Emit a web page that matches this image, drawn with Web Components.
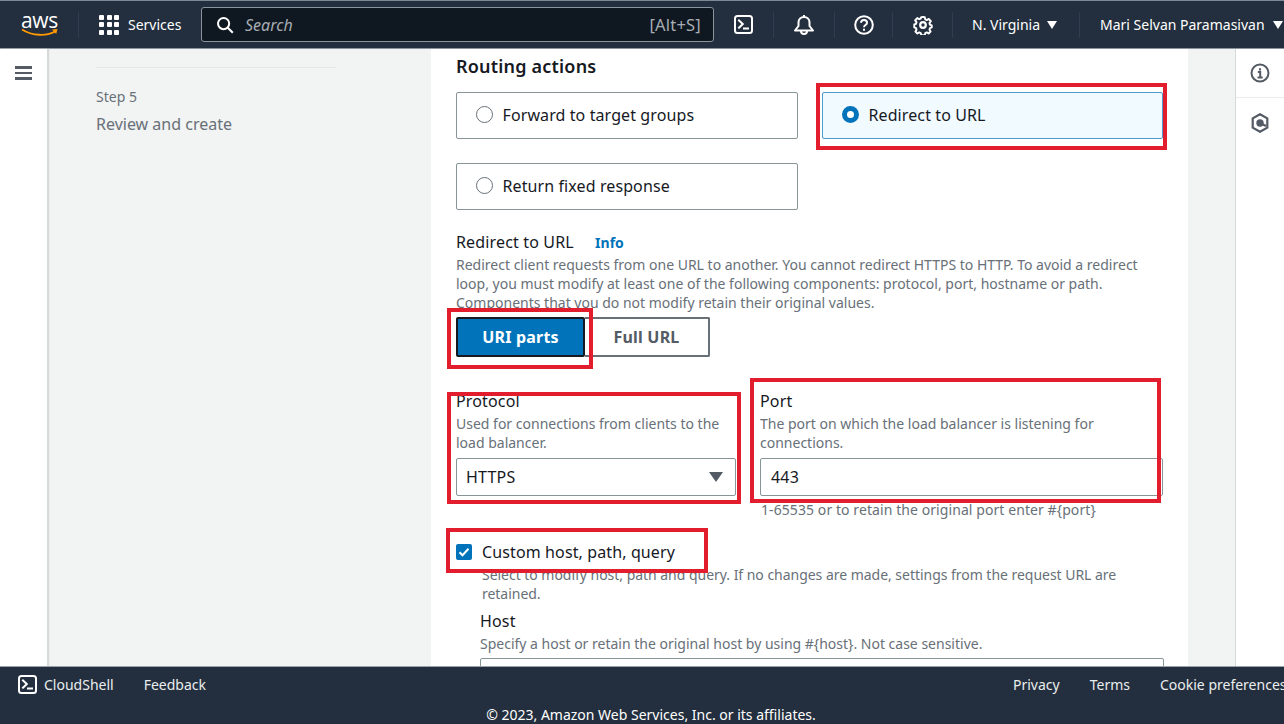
<!DOCTYPE html>
<html lang="en">
<head>
<meta charset="utf-8">
<title>Edit listener</title>
<style>
  html, body { margin: 0; height: 100%; }
  body { font-family: "Noto Sans", "Open Sans", sans-serif; color: #16191f; overflow: hidden; }
  app-shell { height: 724px; }
</style>
</head>
<body>
<app-shell>
  <top-bar slot="top"></top-bar>
  <side-rail slot="left"></side-rail>
  <step-nav slot="steps" number="Step 5" name="Review and create"></step-nav>
  <routing-form slot="main"></routing-form>
  <tool-rail slot="right"></tool-rail>
  <foot-bar slot="bottom"></foot-bar>
</app-shell>

<script>
const ICON_SHELL = `<svg width="19" height="19" viewBox="0 0 19 19" fill="none" stroke="#fff" stroke-width="2"><rect x="1" y="1" width="17" height="17" rx="2.5"/><path d="M5 5.500l3.800 3.600L5 12.700M10 13.500h4" stroke-linecap="square"/></svg>`;

function define(name, html) {
  customElements.define(name, class extends HTMLElement {
    constructor() {
      super();
      this.attachShadow({ mode: "open" }).innerHTML = html;
    }
  });
}

define("app-shell", `
<style>
  :host { display: grid; grid-template-rows: 49px 1fr 58px; width: 1284px; }
  .middle { display: grid; grid-template-columns: 48px 383px 757px 47px 49px; min-height: 0; background: #f2f3f3; }
</style>
<slot name="top"></slot>
<div class="middle">
  <slot name="left"></slot>
  <slot name="steps"></slot>
  <slot name="main"></slot>
  <div></div>
  <slot name="right"></slot>
</div>
<slot name="bottom"></slot>`);

define("top-bar", `
<style>
  :host { display: flex; align-items: center; box-sizing: border-box; height: 49px; background: #232f3e; color: #fff;
    border-top: 1px solid #7d8894; border-bottom: 1px solid #8b949e; font-size: 14px; white-space: nowrap; overflow: hidden; }
  .logo { width: 78px; box-sizing: border-box; padding-left: 21px; display: flex; flex-direction: column; align-items: flex-start; }
  .logo b { font: 400 21px/17px "Open Sans", sans-serif; letter-spacing: -.4px; }
  .logo svg { margin-top: -1px; }
  .cell { display: flex; align-items: center; justify-content: center; height: 26px; border-left: 1px solid #2f3d4e; flex: none; box-sizing: border-box; }
  .services { width: 123px; gap: 9px; justify-content: flex-start; padding-left: 20px; }
  .grid { display: grid; grid-template-columns: repeat(3, 5px); gap: 2.500px; }
  .grid i { width: 5px; height: 5px; background: #fff; border-radius: 1px; }
  .search { flex: none; width: 513px; height: 35px; box-sizing: border-box; background: #0f1720; border: 1px solid #8b949e; border-radius: 3px;
    display: flex; align-items: center; gap: 11px; padding: 0 12px 0 14px; color: #a7adb4; font-size: 16px; }
  .search em { flex: 1; }
  .search span { font-size: 16.500px; letter-spacing: .2px; }
  .first { width: 59px; border: 0; }
  .region { width: 127px; justify-content: flex-start; padding-left: 19px; gap: 7px; }
  .user { width: 205px; justify-content: flex-start; padding-left: 20px; gap: 8px; }
  .tri { width: 0; height: 0; border: 5px solid transparent; border-top: 8px solid #fff; border-bottom: 0; }
</style>
<div class="logo">
  <b>aws</b>
  <svg width="38" height="9" viewBox="0 0 38 9" fill="none"><path d="M1 1.500C11 8 26 8.500 35 3" stroke="#ff9900" stroke-width="1.800"/><path d="M31 1.500l5.500-.6-1.300 5z" fill="#ff9900"/></svg>
</div>
<div class="cell services"><div class="grid"><i></i><i></i><i></i><i></i><i></i><i></i><i></i><i></i><i></i></div>Services</div>
<div class="search">
  <svg width="18" height="18" viewBox="0 0 18 18" fill="none" stroke="#fff" stroke-width="2"><circle cx="7.600" cy="7.600" r="5.600"/><path d="M11.800 11.800l5 5"/></svg>
  <em>Search</em><span>[Alt+S]</span>
</div>
<div class="cell first">${ICON_SHELL}</div>
<div class="cell" style="width:61px"><svg width="22" height="22" viewBox="0 0 22 22" fill="none" stroke="#fff" stroke-width="2"><path d="M2 16.500h18L16.500 12V8.500C16.500 5 14 3 11 3S5.500 5 5.500 8.500V12z" stroke-linejoin="round"/><path d="M8 17a3 3 0 0 0 6 0"/><path d="M11 1v2"/></svg></div>
<div class="cell" style="width:58px"><svg width="20" height="20" viewBox="0 0 20 20" fill="none" stroke="#fff" stroke-width="2"><circle cx="10" cy="10" r="8.800"/><path d="M7 7.800C7 5.900 8.400 5 10 5s3 1 3 2.700c0 2.400-3 2.300-3 4.600"/><path d="M10 13.700v2"/></svg></div>
<div class="cell" style="width:60px"><svg width="20" height="20" viewBox="0 0 20 20" fill="none" stroke="#fff" stroke-width="2.200"><circle cx="10" cy="10" r="2.800"/><path d="M10 1.200l2 .2.500 2.500 1.800.8 2.200-1.300 2.300 2.600-1.500 2 .5 1.900 2 .8v2.200l-2 .8-.5 1.900 1.200 2-2.200 2.200-2-1.300-1.800.8-.5 2.400H8l-.5-2.400-1.800-.8-2 1.300-2.200-2.200 1.200-2-.5-1.900-2-.8V9.700l2-.8.500-1.900-1.500-2L3.500 2.400l2.200 1.300 1.800-.8L8 1.400z" transform="translate(1.100 .9) scale(.89)" stroke-linejoin="round"/></svg></div>
<div class="cell region">N. Virginia <i class="tri"></i></div>
<div class="cell user">Mari Selvan Paramasivan <i class="tri"></i></div>`);

define("side-rail", `
<style>
  :host { display: block; background: #fff; border-right: 1px solid #d5dbdb; box-shadow: 1px 0 1px #d5dbdb; padding: 17px 0 0 15px; box-sizing: border-box; }
  i { display: block; width: 17px; height: 2.500px; background: #545b64; margin-bottom: 3px; }
</style>
<i></i><i></i><i></i>`);

define("step-nav", `
<style>
  :host { display: block; padding: 18px 95px 0 48px; color: #687078; }
  hr { border: 0; border-top: 1.500px solid #e6e8e8; margin: 0 0 19px; }
  small { display: block; font-size: 14px; line-height: 20px; }
  strong { display: block; font-weight: 400; font-size: 16px; line-height: 22px; margin-top: 6px; }
</style>
<hr>
<small id="n"></small>
<strong id="t"></strong>`);

define("radio-tile", `
<style>
  :host { display: flex; align-items: center; gap: 10px; height: 47px; box-sizing: border-box; padding: 0 18.500px 2px;
    background: #fff; border: 1px solid #879596; border-radius: 2px; font-size: 16px; letter-spacing: .1px; }
  :host([checked]) { background: #f1faff; border-color: #4a9bcf; }
  i { width: 17px; height: 17px; box-sizing: border-box; border: 1.500px solid #687078; border-radius: 50%; background: #fff; margin-top: 2px; margin-bottom: 2px; }
  :host([checked]) i { border: 5px solid #0073bb; }
</style>
<i></i><slot></slot>`);

define("field-block", `
<style>
  :host { display: block; }
  .label { font-size: 16px; line-height: 22px; letter-spacing: .15px; }
  .desc { font-size: 14px; line-height: 19px; color: #687078; margin-top: var(--desc-gap, 2px); }
</style>
<div class="label"><slot name="label"></slot></div>
<div class="desc"><slot name="desc"></slot></div>
<slot></slot>`);

define("text-box", `
<style>
  :host { display: flex; align-items: center; justify-content: space-between; box-sizing: border-box; height: 38px; margin-top: 6px;
    padding: 0 12px 0 10px; background: #fff; border: 1px solid #879596; border-radius: 2px; font-size: 16px; letter-spacing: .2px; }
  :host([select]) { padding-left: 9px; }
  i { display: none; width: 0; height: 0; border: 7px solid transparent; border-top: 10px solid #545b64; border-bottom: 0; }
  :host([select]) i { display: block; }
</style>
<slot></slot><i></i>`);

define("seg-toggle", `
<style>
  :host { display: flex; width: 254px; height: 40px; font-weight: 700; font-size: 16px; letter-spacing: .2px; color: #545b64; }
  div { display: flex; align-items: center; justify-content: center; box-sizing: border-box; }
  .on { width: 129px; background: #0073bb; color: #fff; border: 2px solid #16191f; border-radius: 2px; }
  .off { width: 125px; background: #fff; border: 2px solid #687078; border-left: 0; border-radius: 0 2px 2px 0; }
</style>
<div class="on">URI parts</div><div class="off">Full URL</div>`);

define("check-row", `
<style>
  :host { display: flex; align-items: center; gap: 10px; font-size: 16px; letter-spacing: .12px; height: 22px; }
  svg { flex: none; }
</style>
<svg width="16" height="16" viewBox="0 0 16 16"><rect width="16" height="16" rx="2" fill="#0073bb"/><path d="M3.500 8.200l3 3 6-6.500" fill="none" stroke="#fff" stroke-width="2"/></svg>
<slot></slot>`);

define("red-box", `
<style>
  :host { position: absolute; box-sizing: border-box; border: 4px solid #e11d2e; pointer-events: none; }
</style>`);

define("routing-form", `
<style>
  :host { display: block; position: relative; overflow: hidden; background: #fff; padding: 5px 24px 0 25px; box-sizing: border-box; min-height: 0; }
  h2 { margin: 0; font-size: 18px; line-height: 24px; font-weight: 600; letter-spacing: .2px; }
  .tiles { display: grid; grid-template-columns: 342px 341px; gap: 24px; margin-top: 14px; }
  .redirect { margin-top: 21px; --desc-gap: 1px; }
  .redirect .info { color: #0073bb; font-size: 14px; font-weight: 700; margin-left: 17px; letter-spacing: 0; }
  seg-toggle { margin-top: 4.500px; }
  .pair { display: grid; grid-template-columns: 280px 403px; gap: 24px; margin-top: 33.500px; }
  .hint { font-size: 14px; line-height: 19px; letter-spacing: .08px; color: #687078; margin: 4px 0 0 305px; }
  check-row { margin-top: 22px; }
  .indent { padding-left: 24px; }
  .more { font-size: 14px; line-height: 19px; letter-spacing: -.03px; color: #687078; margin-top: 2px; padding-left: 2px; }
  .host { margin-top: 7px; }
  .stub { height: 38px; margin-top: 5px; border: 1px solid #879596; border-radius: 2px; }
  .d1 { left: 385px; top: 34px; width: 351px; height: 67px; }
  .d2 { left: 16px; top: 259px; width: 146px; height: 61px; }
  .d3 { left: 16px; top: 343px; width: 294px; height: 112px; }
  .d4 { left: 319px; top: 329px; width: 411px; height: 125px; }
  .d5 { left: 15px; top: 479px; width: 262px; height: 45px; }
</style>
<h2>Routing actions</h2>
<div class="tiles">
  <radio-tile>Forward to target groups</radio-tile>
  <radio-tile checked>Redirect to URL</radio-tile>
  <radio-tile>Return fixed response</radio-tile>
</div>
<field-block class="redirect">
  <span slot="label">Redirect to URL <span class="info">Info</span></span>
  <span slot="desc">Redirect client requests from one URL to another. You cannot redirect HTTPS to HTTP. To avoid a redirect loop, you must modify at least one of the following components: protocol, port, hostname or path. Components that you do not modify retain their original values.</span>
</field-block>
<seg-toggle></seg-toggle>
<div class="pair">
  <field-block>
    <span slot="label">Protocol</span>
    <span slot="desc">Used for connections from clients to the load balancer.</span>
    <text-box select>HTTPS</text-box>
  </field-block>
  <field-block>
    <span slot="label">Port</span>
    <span slot="desc">The port on which the load balancer is listening for connections.</span>
    <text-box>443</text-box>
  </field-block>
</div>
<div class="hint">1-65535 or to retain the original port enter #{port}</div>
<check-row>Custom host, path, query</check-row>
<div class="indent">
  <div class="more">Select to modify host, path and query. If no changes are made, settings from the request URL are retained.</div>
  <field-block class="host">
    <span slot="label">Host</span>
    <span slot="desc">Specify a host or retain the original host by using #{host}. Not case sensitive.</span>
  </field-block>
  <div class="stub"></div>
</div>
<red-box class="d1"></red-box>
<red-box class="d2"></red-box>
<red-box class="d3"></red-box>
<red-box class="d4"></red-box>
<red-box class="d5"></red-box>`);

define("tool-rail", `
<style>
  :host { display: block; background: #fff; border-left: 1px solid #d5dbdb; }
  div { height: 49px; display: flex; align-items: center; justify-content: center; box-sizing: border-box; }
  .top { border-bottom: 1px solid #eaeded; }
</style>
<div class="top"><svg width="20" height="20" viewBox="0 0 20 20" fill="none" stroke="#545b64" stroke-width="2"><circle cx="10" cy="10" r="8.500"/><path d="M10 5.200v2.200M7.800 9h2.400v5M7.500 14.500h5.200"/></svg></div>
<div><svg width="18" height="20" viewBox="0 0 18 20" fill="none" stroke="#545b64" stroke-width="2.200"><path d="M9 1.200l7.300 4.200v9.200L9 18.800l-7.300-4.200V5.400z"/><circle cx="9" cy="10" r="2.600" fill="#545b64"/><path d="M9 10l6 3"/></svg></div>`);

define("foot-bar", `
<style>
  :host { display: block; box-sizing: border-box; height: 58px; background: #232f3e; color: #eaeded; border-top: 1px solid #9aa2aa; font-size: 14px; white-space: nowrap; overflow: hidden; }
  .row { display: flex; align-items: center; height: 35px; padding-left: 18px; }
  .shell { display: flex; align-items: center; gap: 7px; }
  .feedback { margin-left: 30px; }
  .links { margin-left: auto; display: flex; gap: 30px; width: 271px; flex: none; }
  .copy { text-align: center; line-height: 20px; margin-top: 3px; padding-left: 18px; color: #fff; }
</style>
<div class="row">
  <span class="shell">${ICON_SHELL}CloudShell</span>
  <span class="feedback">Feedback</span>
  <span class="links"><span>Privacy</span><span>Terms</span><span>Cookie preferences</span></span>
</div>
<div class="copy">© 2023, Amazon Web Services, Inc. or its affiliates.</div>`);

// step-nav takes its two texts from attributes
const steps = document.querySelector("step-nav");
steps.shadowRoot.getElementById("n").textContent = steps.getAttribute("number");
steps.shadowRoot.getElementById("t").textContent = steps.getAttribute("name");
</script>
</body>
</html>
